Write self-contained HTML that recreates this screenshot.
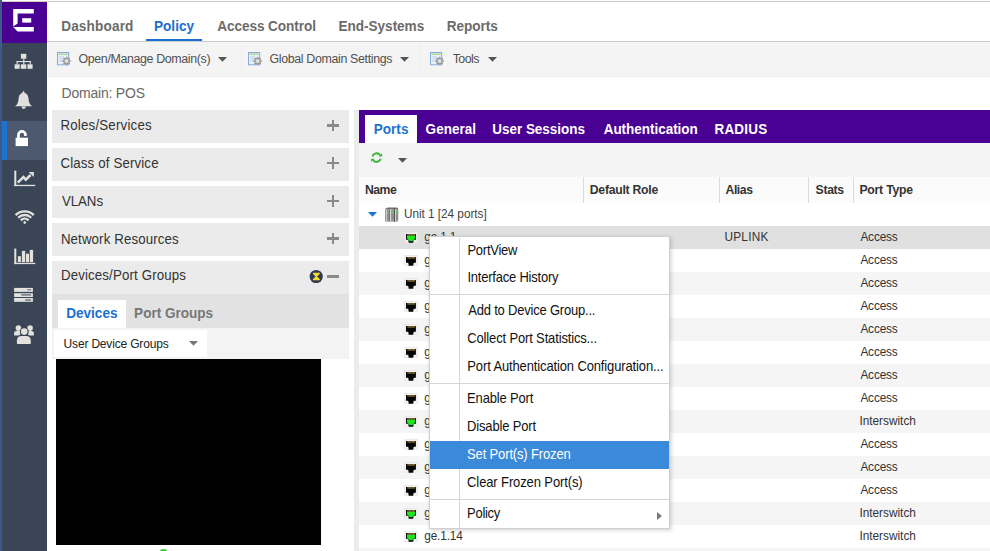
<!DOCTYPE html>
<html><head><meta charset="utf-8"><style>
*{margin:0;padding:0;box-sizing:border-box}
html,body{width:990px;height:551px;overflow:hidden;background:#fff;font-family:"Liberation Sans",sans-serif;position:relative}
.a{position:absolute}
.t{position:absolute;white-space:nowrap;line-height:1}

</style></head><body>
<div class="a" style="left:0;top:0;width:47px;height:551px;background:#3a4657"></div>
<div class="a" style="left:0;top:0;width:2px;height:551px;background:#3f5a86"></div>
<div class="a" style="left:2px;top:0;width:988px;height:1px;background:#fdfdfd"></div>
<div class="a" style="left:2px;top:1px;width:988px;height:1px;background:#cfcfc8"></div>
<div class="a" style="left:2px;top:2px;width:45px;height:41px;background:#4a0093"></div>
<svg class="a" style="left:0;top:0" width="47" height="43" viewBox="0 0 47 43">
<path d="M13.2 8.9 H33.8 V13.6 H17.6 V23.5 L13.2 26.6 Z" fill="#fff"/>
<path d="M13.2 27.1 H33.8 V31.6 H17.6 Z" fill="#fff"/>
<rect x="22.2" y="18.2" width="9" height="4.4" fill="#fff"/>
</svg>
<div class="a" style="left:2px;top:121px;width:45px;height:38.6px;background:#4c596f"></div>
<div class="a" style="left:2px;top:121px;width:4.5px;height:38.6px;background:#1e72d2"></div>
<svg class="a" style="left:0;top:43px" width="47" height="320" viewBox="0 43 47 320">
<!-- sitemap -->
<rect x="20.9" y="53.8" width="5.4" height="4.9" fill="#e2e1de"/>
<rect x="23.2" y="58.5" width="1.2" height="3" fill="#e2e1de"/>
<rect x="16.6" y="61" width="14.2" height="1.1" fill="#e2e1de"/>
<rect x="16.6" y="61" width="1.1" height="3.4" fill="#e2e1de"/>
<rect x="29.7" y="61" width="1.1" height="3.4" fill="#e2e1de"/>
<rect x="23.2" y="61" width="1.2" height="3.4" fill="#e2e1de"/>
<rect x="14.6" y="64.3" width="5.1" height="4.5" fill="#e2e1de"/>
<rect x="20.8" y="64.3" width="5.5" height="4.5" fill="#e2e1de"/>
<rect x="27.4" y="64.3" width="5.2" height="4.5" fill="#e2e1de"/>
<!-- bell -->
<path d="M23.5 91 C24.2 91 24.4 92 24.6 93 C27.5 93.7 28.4 96 28.6 99.5 C28.8 102.5 29.8 104.5 32.2 106.3 L15 106.3 C17.4 104.5 18.3 102.5 18.5 99.5 C18.7 96 19.6 93.7 22.4 93 C22.6 92 22.8 91 23.5 91 Z" fill="#e2e1de"/>
<path d="M21.5 106.6 A2.2 2.3 0 0 0 25.9 106.6 Z" fill="#e2e1de"/>
<!-- lock -->
<rect x="15.6" y="137.7" width="12.4" height="8.4" fill="#fff"/>
<path d="M18.45 137.9 V134.95 A3.5 3.5 0 0 1 25.45 134.95 V135.9" stroke="#fff" stroke-width="2.7" fill="none"/>
<!-- chart -->
<rect x="14.3" y="170.6" width="2" height="15.5" fill="#e2e1de"/>
<rect x="14.3" y="184.8" width="21" height="1.3" fill="#e2e1de"/>
<path d="M17.8 182.6 L23.4 177 L25.8 179.6 L30.6 175" stroke="#e2e1de" stroke-width="2.5" fill="none"/>
<path d="M28.6 172.1 L33.9 172.1 L33.9 177 Z" fill="#e2e1de"/>
<!-- wifi -->
<path d="M15.6 215.1 A12.8 12.8 0 0 1 33.8 215.1" stroke="#e2e1de" stroke-width="2.3" fill="none"/>
<path d="M18.2 217.7 A9.2 9.2 0 0 1 31.2 217.7" stroke="#e2e1de" stroke-width="2.3" fill="none"/>
<path d="M20.8 220.3 A5.6 5.6 0 0 1 28.6 220.3" stroke="#e2e1de" stroke-width="2.3" fill="none"/>
<path d="M23 222.5 L24.7 220.8 L26.4 222.5 L24.7 224.2 Z" fill="#e2e1de"/>
<!-- bars -->
<rect x="14.3" y="248.6" width="2" height="15.5" fill="#e2e1de"/>
<rect x="14.3" y="262.8" width="21" height="1.3" fill="#e2e1de"/>
<rect x="17.9" y="256.2" width="3" height="5.9" fill="#e2e1de"/>
<rect x="21.9" y="250.9" width="3.3" height="11.2" fill="#e2e1de"/>
<rect x="26" y="253.7" width="3.1" height="8.4" fill="#e2e1de"/>
<rect x="29.8" y="249.9" width="3.3" height="12.2" fill="#e2e1de"/>
<!-- server -->
<rect x="14.1" y="287.9" width="18.8" height="4" fill="#e2e1de"/>
<rect x="14.1" y="293.2" width="18.8" height="3.8" fill="#e2e1de"/>
<rect x="14.1" y="298" width="18.8" height="3.8" fill="#e2e1de"/>
<rect x="27.3" y="289.3" width="3.8" height="1" fill="#555c66"/>
<rect x="21.2" y="294.3" width="9.9" height="1.2" fill="#555c66"/>
<rect x="25.2" y="299.4" width="5.9" height="1.2" fill="#555c66"/>
<!-- users -->
<circle cx="18.4" cy="328.1" r="2.8" fill="#e2e1de"/>
<circle cx="30.1" cy="328.1" r="2.8" fill="#e2e1de"/>
<path d="M14.1 335.5 V333 Q14.1 330.9 16.3 330.9 H20.2 V335.5 Z" fill="#e2e1de"/>
<path d="M33.9 335.5 V333 Q33.9 330.9 31.7 330.9 H28.3 V335.5 Z" fill="#e2e1de"/>
<circle cx="24.2" cy="331.6" r="4.3" fill="#3a4657"/>
<circle cx="24.2" cy="331.6" r="3.3" fill="#e2e1de"/>
<path d="M15.9 344.6 V340.5 Q15.9 335 21.4 335 H26.3 Q31.8 335 31.8 340.5 V344.6 Z" fill="#3a4657"/>
<path d="M16.9 343.2 Q16.9 343.9 17.6 343.9 H30.1 Q30.8 343.9 30.8 343.2 V340.6 Q30.8 335.9 26.1 335.9 H21.6 Q16.9 335.9 16.9 340.6 Z" fill="#e2e1de"/>
</svg>
<div class="a" style="left:47px;top:41px;width:943px;height:1px;background:#c9cccc"></div>
<div class="t" style="left:61.20px;top:19.80px;font-weight:bold;font-size:13.6px;letter-spacing:0.150px;color:#6b6b6b;transform:scaleY(1.05);transform-origin:0 11px;">Dashboard</div>
<div class="t" style="left:154.00px;top:19.80px;font-weight:bold;font-size:13.6px;letter-spacing:0.000px;color:#1a6fd0;transform:scaleY(1.05);transform-origin:0 11px;">Policy</div>
<div class="t" style="left:217.30px;top:19.80px;font-weight:bold;font-size:13.6px;letter-spacing:-0.085px;color:#6b6b6b;transform:scaleY(1.05);transform-origin:0 11px;">Access Control</div>
<div class="t" style="left:338.60px;top:19.80px;font-weight:bold;font-size:13.6px;letter-spacing:-0.050px;color:#6b6b6b;transform:scaleY(1.05);transform-origin:0 11px;">End-Systems</div>
<div class="t" style="left:446.80px;top:19.80px;font-weight:bold;font-size:13.6px;letter-spacing:-0.067px;color:#6b6b6b;transform:scaleY(1.05);transform-origin:0 11px;">Reports</div>
<div class="a" style="left:146px;top:38.8px;width:56px;height:2.2px;background:#1a6fd0"></div>
<div class="a" style="left:48px;top:42px;width:942px;height:34px;background:#f4f4f4"></div>
<div class="a" style="left:48px;top:76px;width:942px;height:1px;background:#e8ecec"></div>
<svg class="a" style="left:57px;top:51.5px" width="16" height="16" viewBox="0 0 16 16">
<rect x="0.5" y="0.5" width="11.2" height="12.3" fill="#eaf0f9" stroke="#86a9db" stroke-width="1"/>
<rect x="1.6" y="1.5" width="9" height="1.3" fill="#a3d683"/>
<rect x="2" y="4.4" width="5" height="0.9" fill="#bcd0ea"/>
<rect x="2" y="6.4" width="5" height="0.9" fill="#bcd0ea"/>
<rect x="2" y="8.6" width="5" height="0.9" fill="#bcd0ea"/>
<g transform="translate(9.6 9.0)">
<circle r="3.2" fill="#9a9a9a"/>
<path d="M-0.75 -4.3 H0.75 V4.3 H-0.75 Z M-4.3 -0.75 H4.3 V0.75 H-4.3 Z" fill="#9a9a9a"/>
<path d="M-0.75 -4.3 H0.75 V4.3 H-0.75 Z M-4.3 -0.75 H4.3 V0.75 H-4.3 Z" fill="#9a9a9a" transform="rotate(45)"/>
<circle r="2.2" fill="#c4c4c4"/>
<circle r="1.3" fill="#e4ecf6"/>
</g></svg>
<svg class="a" style="left:247.6px;top:51.5px" width="16" height="16" viewBox="0 0 16 16">
<rect x="0.5" y="0.5" width="11.2" height="12.3" fill="#eaf0f9" stroke="#86a9db" stroke-width="1"/>
<rect x="1.6" y="1.5" width="9" height="1.3" fill="#a3d683"/>
<rect x="2" y="4.4" width="5" height="0.9" fill="#bcd0ea"/>
<rect x="2" y="6.4" width="5" height="0.9" fill="#bcd0ea"/>
<rect x="2" y="8.6" width="5" height="0.9" fill="#bcd0ea"/>
<g transform="translate(9.6 9.0)">
<circle r="3.2" fill="#9a9a9a"/>
<path d="M-0.75 -4.3 H0.75 V4.3 H-0.75 Z M-4.3 -0.75 H4.3 V0.75 H-4.3 Z" fill="#9a9a9a"/>
<path d="M-0.75 -4.3 H0.75 V4.3 H-0.75 Z M-4.3 -0.75 H4.3 V0.75 H-4.3 Z" fill="#9a9a9a" transform="rotate(45)"/>
<circle r="2.2" fill="#c4c4c4"/>
<circle r="1.3" fill="#e4ecf6"/>
</g></svg>
<svg class="a" style="left:430px;top:51.5px" width="16" height="16" viewBox="0 0 16 16">
<rect x="0.5" y="0.5" width="11.2" height="12.3" fill="#eaf0f9" stroke="#86a9db" stroke-width="1"/>
<rect x="1.6" y="1.5" width="9" height="1.3" fill="#a3d683"/>
<rect x="2" y="4.4" width="5" height="0.9" fill="#bcd0ea"/>
<rect x="2" y="6.4" width="5" height="0.9" fill="#bcd0ea"/>
<rect x="2" y="8.6" width="5" height="0.9" fill="#bcd0ea"/>
<g transform="translate(9.6 9.0)">
<circle r="3.2" fill="#9a9a9a"/>
<path d="M-0.75 -4.3 H0.75 V4.3 H-0.75 Z M-4.3 -0.75 H4.3 V0.75 H-4.3 Z" fill="#9a9a9a"/>
<path d="M-0.75 -4.3 H0.75 V4.3 H-0.75 Z M-4.3 -0.75 H4.3 V0.75 H-4.3 Z" fill="#9a9a9a" transform="rotate(45)"/>
<circle r="2.2" fill="#c4c4c4"/>
<circle r="1.3" fill="#e4ecf6"/>
</g></svg>
<div class="a" style="left:241px;top:43px;width:1px;height:32px;background:#efefef"></div>
<div class="a" style="left:419px;top:43px;width:1px;height:32px;background:#efefef"></div>
<div class="t" style="left:78.50px;top:52.90px;font-weight:normal;font-size:12.4px;letter-spacing:-0.355px;color:#505050;transform:scaleY(1.05);transform-origin:0 10px;">Open/Manage Domain(s)</div>
<div class="t" style="left:269.50px;top:52.90px;font-weight:normal;font-size:12.4px;letter-spacing:-0.343px;color:#505050;transform:scaleY(1.05);transform-origin:0 10px;">Global Domain Settings</div>
<div class="t" style="left:452.70px;top:52.90px;font-weight:normal;font-size:12.4px;letter-spacing:-0.525px;color:#505050;transform:scaleY(1.05);transform-origin:0 10px;">Tools</div>
<svg class="a" style="left:218px;top:56.7px" width="10" height="6" viewBox="0 0 10 6"><path d="M0 0 H9 L4.5 4.7 Z" fill="#555"/></svg>
<svg class="a" style="left:400.2px;top:56.8px" width="10" height="6" viewBox="0 0 10 6"><path d="M0 0 H9 L4.5 4.7 Z" fill="#555"/></svg>
<svg class="a" style="left:487.6px;top:56.8px" width="10" height="6" viewBox="0 0 10 6"><path d="M0 0 H9 L4.5 4.7 Z" fill="#555"/></svg>
<div class="t" style="left:61.60px;top:86.20px;font-weight:normal;font-size:14.0px;letter-spacing:-0.220px;color:#6a6a6a;transform:scaleY(1.04);transform-origin:0 12px;">Domain: POS</div>
<div class="a" style="left:52px;top:110.0px;width:297px;height:32.8px;background:#ebebeb"></div>
<div class="t" style="left:60.40px;top:118.90px;font-weight:normal;font-size:13.3px;letter-spacing:0.200px;color:#333;transform:scaleY(1.09);transform-origin:0 11px;">Roles/Services</div>
<div class="a" style="left:327px;top:123.9px;width:12px;height:2.8px;background:#8a8a8a"></div>
<div class="a" style="left:331.6px;top:119.6px;width:2.8px;height:11.4px;background:#8a8a8a"></div>
<div class="a" style="left:52px;top:147.8px;width:297px;height:32.8px;background:#ebebeb"></div>
<div class="t" style="left:60.40px;top:156.60px;font-weight:normal;font-size:13.3px;letter-spacing:0.140px;color:#333;transform:scaleY(1.09);transform-origin:0 11px;">Class of Service</div>
<div class="a" style="left:327px;top:161.7px;width:12px;height:2.8px;background:#8a8a8a"></div>
<div class="a" style="left:331.6px;top:157.4px;width:2.8px;height:11.4px;background:#8a8a8a"></div>
<div class="a" style="left:52px;top:185.6px;width:297px;height:32.8px;background:#ebebeb"></div>
<div class="t" style="left:61.90px;top:195.00px;font-weight:normal;font-size:13.3px;letter-spacing:-0.050px;color:#333;transform:scaleY(1.09);transform-origin:0 11px;">VLANs</div>
<div class="a" style="left:327px;top:199.5px;width:12px;height:2.8px;background:#8a8a8a"></div>
<div class="a" style="left:331.6px;top:195.2px;width:2.8px;height:11.4px;background:#8a8a8a"></div>
<div class="a" style="left:52px;top:223.4px;width:297px;height:32.8px;background:#ebebeb"></div>
<div class="t" style="left:60.90px;top:232.90px;font-weight:normal;font-size:13.3px;letter-spacing:0.106px;color:#333;transform:scaleY(1.09);transform-origin:0 11px;">Network Resources</div>
<div class="a" style="left:327px;top:237.3px;width:12px;height:2.8px;background:#8a8a8a"></div>
<div class="a" style="left:331.6px;top:233.0px;width:2.8px;height:11.4px;background:#8a8a8a"></div>
<div class="a" style="left:52px;top:261.2px;width:297px;height:33px;background:#ebebeb"></div>
<div class="t" style="left:60.90px;top:269.40px;font-weight:normal;font-size:13.3px;letter-spacing:0.133px;color:#333;transform:scaleY(1.09);transform-origin:0 11px;">Devices/Port Groups</div>
<div class="a" style="left:327px;top:275px;width:12px;height:2.9px;background:#8a8a8a"></div>
<svg class="a" style="left:309px;top:269px" width="15" height="15" viewBox="0 0 15 15">
<circle cx="7.2" cy="7.5" r="6.6" fill="#2f3a50"/>
<path d="M4 3.7 H10.8 V4.9 L8 7.5 L10.8 10.1 V11.3 H4 V10.1 L6.6 7.5 L4 4.9 Z" fill="#f1db2c"/>
</svg>
<div class="a" style="left:52px;top:294.3px;width:297px;height:33.7px;background:#e2e2e2"></div>
<div class="a" style="left:57.7px;top:300px;width:68.2px;height:28px;background:#fff"></div>
<div class="t" style="left:66.20px;top:306.80px;font-weight:bold;font-size:13.6px;letter-spacing:-0.017px;color:#1a6fd0;transform:scaleY(1.05);transform-origin:0 11px;">Devices</div>
<div class="t" style="left:134.10px;top:306.80px;font-weight:bold;font-size:13.6px;letter-spacing:-0.030px;color:#777;transform:scaleY(1.05);transform-origin:0 11px;">Port Groups</div>
<div class="a" style="left:52px;top:328px;width:297px;height:31px;background:#f3f3f3"></div>
<div class="a" style="left:53.8px;top:329.8px;width:153.3px;height:27.4px;background:#fff"></div>
<div class="t" style="left:63.60px;top:338.40px;font-weight:normal;font-size:12.0px;letter-spacing:-0.176px;color:#222;transform:scaleY(1.07);transform-origin:0 10px;">User Device Groups</div>
<svg class="a" style="left:188.7px;top:341.2px" width="10" height="6" viewBox="0 0 10 6"><path d="M0 0 H9 L4.5 4.7 Z" fill="#777"/></svg>
<div class="a" style="left:56px;top:359px;width:265px;height:186px;background:#000"></div>
<div class="a" style="left:160px;top:549px;width:7px;height:4px;border-radius:50%;background:#3dcc3d"></div>
<div class="a" style="left:354px;top:110px;width:5px;height:441px;background:#ececec"></div>
<div class="a" style="left:359px;top:110px;width:631px;height:33px;background:#4a0093"></div>
<div class="a" style="left:365px;top:115px;width:51.6px;height:28px;background:#fff"></div>
<div class="t" style="left:373.70px;top:122.80px;font-weight:bold;font-size:13.5px;letter-spacing:0.050px;color:#1a73d6;transform:scaleY(1.09);transform-origin:0 11px;">Ports</div>
<div class="t" style="left:425.60px;top:122.80px;font-weight:bold;font-size:13.5px;letter-spacing:0.033px;color:#fff;transform:scaleY(1.09);transform-origin:0 11px;">General</div>
<div class="t" style="left:492.30px;top:122.80px;font-weight:bold;font-size:13.5px;letter-spacing:-0.033px;color:#fff;transform:scaleY(1.09);transform-origin:0 11px;">User Sessions</div>
<div class="t" style="left:603.70px;top:122.80px;font-weight:bold;font-size:13.5px;letter-spacing:-0.031px;color:#fff;transform:scaleY(1.09);transform-origin:0 11px;">Authentication</div>
<div class="t" style="left:714.50px;top:122.80px;font-weight:bold;font-size:13.5px;letter-spacing:0.180px;color:#fff;transform:scaleY(1.09);transform-origin:0 11px;">RADIUS</div>
<div class="a" style="left:359px;top:143px;width:631px;height:34px;background:#f4f4f4"></div>
<svg class="a" style="left:370px;top:151px" width="14" height="14" viewBox="0 0 14 14">
<path d="M2.45 5.49 A4.3 4.3 0 0 1 9.89 3.84" stroke="#2fb52f" stroke-width="1.9" fill="none"/>
<path d="M12.1 2.2 V5.6 H8.5 Z" fill="#2fb52f"/>
<path d="M10.75 7.71 A4.3 4.3 0 0 1 3.31 9.36" stroke="#2fb52f" stroke-width="1.9" fill="none"/>
<path d="M1.2 11.1 V7.7 H4.8 Z" fill="#2fb52f"/>
</svg>
<svg class="a" style="left:398.2px;top:157.9px" width="10" height="6" viewBox="0 0 10 6"><path d="M0 0 H9 L4.5 4.7 Z" fill="#555"/></svg>
<div class="a" style="left:359px;top:177px;width:631px;height:26px;background:#fbfbfb"></div>
<div class="a" style="left:583px;top:177px;width:1px;height:25.5px;background:#dcdcdc"></div>
<div class="a" style="left:718.5px;top:177px;width:1px;height:25.5px;background:#dcdcdc"></div>
<div class="a" style="left:808px;top:177px;width:1px;height:25.5px;background:#dcdcdc"></div>
<div class="a" style="left:853px;top:177px;width:1px;height:25.5px;background:#dcdcdc"></div>
<div class="t" style="left:364.90px;top:183.90px;font-weight:bold;font-size:12.2px;letter-spacing:-0.467px;color:#333;transform:scaleY(1.05);transform-origin:0 10px;">Name</div>
<div class="t" style="left:589.80px;top:183.90px;font-weight:bold;font-size:12.2px;letter-spacing:-0.245px;color:#333;transform:scaleY(1.05);transform-origin:0 10px;">Default Role</div>
<div class="t" style="left:725.50px;top:183.90px;font-weight:bold;font-size:12.2px;letter-spacing:-0.425px;color:#333;transform:scaleY(1.05);transform-origin:0 10px;">Alias</div>
<div class="t" style="left:815.60px;top:183.90px;font-weight:bold;font-size:12.2px;letter-spacing:-0.325px;color:#333;transform:scaleY(1.05);transform-origin:0 10px;">Stats</div>
<div class="t" style="left:859.40px;top:183.90px;font-weight:bold;font-size:12.2px;letter-spacing:-0.200px;color:#333;transform:scaleY(1.05);transform-origin:0 10px;">Port Type</div>
<svg class="a" style="left:368.1px;top:211.9px" width="10" height="6" viewBox="0 0 10 6"><path d="M0 0 H9 L4.5 4.7 Z" fill="#1a73d6"/></svg>
<svg class="a" style="left:384px;top:206.5px" width="15" height="15" viewBox="0 0 15 15">
<path d="M1.2 14.3 V2.6 Q1.2 1.2 2.6 0.9 L4 0.6 H12.6 Q14.2 0.6 14.2 2.2 V13 Q14.2 14.6 12.6 14.6 H2.2 Q1.2 14.6 1.2 14.3 Z" fill="#6e6e6e"/>
<rect x="1.8" y="2" width="3.8" height="12" fill="#9c9c9c"/>
<rect x="1.8" y="2" width="0.9" height="12" fill="#e6e6e6"/>
<rect x="5.6" y="2" width="0.6" height="12" fill="#5a5a5a"/>
<rect x="6.2" y="2" width="3.8" height="12" fill="#9c9c9c"/>
<rect x="6.2" y="2" width="0.9" height="12" fill="#e6e6e6"/>
<rect x="10.0" y="1.5" width="0.9" height="13" fill="#333"/>
<rect x="10.9" y="2" width="2.8" height="12" fill="#a0a0a0"/>
<rect x="10.9" y="2" width="0.9" height="12" fill="#eaeaea"/>
<rect x="2.7" y="3.6" width="1.6" height="2" fill="#59c85a"/>
<rect x="7.1" y="3.6" width="1.7" height="2" fill="#59c85a"/>
<rect x="11.8" y="3.6" width="1.5" height="2" fill="#59c85a"/>
<rect x="2.8" y="7" width="2.5" height="6" fill="#858585" opacity="0.6"/>
<rect x="7.2" y="7" width="2.5" height="6" fill="#858585" opacity="0.6"/>
<rect x="11.8" y="7" width="1.8" height="6" fill="#858585" opacity="0.6"/>
</svg>
<div class="t" style="left:404.00px;top:208.60px;font-weight:normal;font-size:11.8px;letter-spacing:-0.038px;color:#444;transform:scaleY(1.09);transform-origin:0 9px;">Unit 1 [24 ports]</div>
<div class="a" style="left:359px;top:226.00px;width:631px;height:23px;background:#e0e0e0"></div>
<svg class="a" style="left:404px;top:231.80px" width="14" height="11.2" viewBox="0 0 14 11.2">
<rect x="0" y="0" width="14" height="11.2" fill="#e4e4e4" opacity="0.75"/>
<rect x="1" y="1" width="12" height="9.4" fill="#f4f4f4" opacity="0.8"/>
<path d="M2 2 H11.9 V7.8 H9.6 L9.2 10.7 H4.7 L4.3 7.8 H2 Z" fill="#050505"/>
<path d="M3 3.5 H11 V6.6 L8.2 9.2 H5.8 L3 6.6 Z" fill="#1ee61e"/>
<rect x="3.4" y="2.2" width="7.4" height="1.4" fill="#a88f3f"/>
<rect x="4.3" y="2.2" width="0.5" height="1.4" fill="#222"/><rect x="5.8" y="2.2" width="0.5" height="1.4" fill="#222"/><rect x="7.3" y="2.2" width="0.5" height="1.4" fill="#222"/><rect x="8.8" y="2.2" width="0.5" height="1.4" fill="#222"/>
</svg>
<div class="t" style="left:424.20px;top:232.10px;font-weight:normal;font-size:11.8px;letter-spacing:-0.117px;color:#333;transform:scaleY(1.09);transform-origin:0 9px;">ge.1.1</div>
<div class="t" style="left:724.50px;top:232.10px;font-weight:normal;font-size:11.8px;letter-spacing:0.240px;color:#333;transform:scaleY(1.09);transform-origin:0 9px;">UPLINK</div>
<div class="t" style="left:860.40px;top:232.10px;font-weight:normal;font-size:11.8px;letter-spacing:-0.140px;color:#333;transform:scaleY(1.09);transform-origin:0 9px;">Access</div>
<div class="a" style="left:359px;top:248.98px;width:631px;height:23px;background:#fff"></div>
<svg class="a" style="left:404px;top:254.78px" width="14" height="11.2" viewBox="0 0 14 11.2">
<rect x="0" y="0" width="14" height="11.2" fill="#e4e4e4" opacity="0.75"/>
<rect x="1" y="1" width="12" height="9.4" fill="#f4f4f4" opacity="0.8"/>
<path d="M2 2 H11.9 V7.8 H9.6 L9.2 10.7 H4.7 L4.3 7.8 H2 Z" fill="#050505"/>
<path d="M3 3.5 H11 V6.6 L8.2 9.2 H5.8 L3 6.6 Z" fill="#050505"/>
<rect x="3.4" y="2.2" width="7.4" height="1.4" fill="#a88f3f"/>
<rect x="4.3" y="2.2" width="0.5" height="1.4" fill="#222"/><rect x="5.8" y="2.2" width="0.5" height="1.4" fill="#222"/><rect x="7.3" y="2.2" width="0.5" height="1.4" fill="#222"/><rect x="8.8" y="2.2" width="0.5" height="1.4" fill="#222"/>
</svg>
<div class="t" style="left:424.20px;top:255.08px;font-weight:normal;font-size:11.8px;letter-spacing:-0.117px;color:#333;transform:scaleY(1.09);transform-origin:0 9px;">ge.1.2</div>
<div class="t" style="left:860.40px;top:255.08px;font-weight:normal;font-size:11.8px;letter-spacing:-0.140px;color:#333;transform:scaleY(1.09);transform-origin:0 9px;">Access</div>
<div class="a" style="left:359px;top:271.96px;width:631px;height:23px;background:#f5f5f5"></div>
<svg class="a" style="left:404px;top:277.76px" width="14" height="11.2" viewBox="0 0 14 11.2">
<rect x="0" y="0" width="14" height="11.2" fill="#e4e4e4" opacity="0.75"/>
<rect x="1" y="1" width="12" height="9.4" fill="#f4f4f4" opacity="0.8"/>
<path d="M2 2 H11.9 V7.8 H9.6 L9.2 10.7 H4.7 L4.3 7.8 H2 Z" fill="#050505"/>
<path d="M3 3.5 H11 V6.6 L8.2 9.2 H5.8 L3 6.6 Z" fill="#050505"/>
<rect x="3.4" y="2.2" width="7.4" height="1.4" fill="#a88f3f"/>
<rect x="4.3" y="2.2" width="0.5" height="1.4" fill="#222"/><rect x="5.8" y="2.2" width="0.5" height="1.4" fill="#222"/><rect x="7.3" y="2.2" width="0.5" height="1.4" fill="#222"/><rect x="8.8" y="2.2" width="0.5" height="1.4" fill="#222"/>
</svg>
<div class="t" style="left:424.20px;top:278.06px;font-weight:normal;font-size:11.8px;letter-spacing:-0.117px;color:#333;transform:scaleY(1.09);transform-origin:0 9px;">ge.1.3</div>
<div class="t" style="left:860.40px;top:278.06px;font-weight:normal;font-size:11.8px;letter-spacing:-0.140px;color:#333;transform:scaleY(1.09);transform-origin:0 9px;">Access</div>
<div class="a" style="left:359px;top:294.94px;width:631px;height:23px;background:#fff"></div>
<svg class="a" style="left:404px;top:300.74px" width="14" height="11.2" viewBox="0 0 14 11.2">
<rect x="0" y="0" width="14" height="11.2" fill="#e4e4e4" opacity="0.75"/>
<rect x="1" y="1" width="12" height="9.4" fill="#f4f4f4" opacity="0.8"/>
<path d="M2 2 H11.9 V7.8 H9.6 L9.2 10.7 H4.7 L4.3 7.8 H2 Z" fill="#050505"/>
<path d="M3 3.5 H11 V6.6 L8.2 9.2 H5.8 L3 6.6 Z" fill="#050505"/>
<rect x="3.4" y="2.2" width="7.4" height="1.4" fill="#a88f3f"/>
<rect x="4.3" y="2.2" width="0.5" height="1.4" fill="#222"/><rect x="5.8" y="2.2" width="0.5" height="1.4" fill="#222"/><rect x="7.3" y="2.2" width="0.5" height="1.4" fill="#222"/><rect x="8.8" y="2.2" width="0.5" height="1.4" fill="#222"/>
</svg>
<div class="t" style="left:424.20px;top:301.04px;font-weight:normal;font-size:11.8px;letter-spacing:-0.117px;color:#333;transform:scaleY(1.09);transform-origin:0 9px;">ge.1.4</div>
<div class="t" style="left:860.40px;top:301.04px;font-weight:normal;font-size:11.8px;letter-spacing:-0.140px;color:#333;transform:scaleY(1.09);transform-origin:0 9px;">Access</div>
<div class="a" style="left:359px;top:317.92px;width:631px;height:23px;background:#f5f5f5"></div>
<svg class="a" style="left:404px;top:323.72px" width="14" height="11.2" viewBox="0 0 14 11.2">
<rect x="0" y="0" width="14" height="11.2" fill="#e4e4e4" opacity="0.75"/>
<rect x="1" y="1" width="12" height="9.4" fill="#f4f4f4" opacity="0.8"/>
<path d="M2 2 H11.9 V7.8 H9.6 L9.2 10.7 H4.7 L4.3 7.8 H2 Z" fill="#050505"/>
<path d="M3 3.5 H11 V6.6 L8.2 9.2 H5.8 L3 6.6 Z" fill="#050505"/>
<rect x="3.4" y="2.2" width="7.4" height="1.4" fill="#a88f3f"/>
<rect x="4.3" y="2.2" width="0.5" height="1.4" fill="#222"/><rect x="5.8" y="2.2" width="0.5" height="1.4" fill="#222"/><rect x="7.3" y="2.2" width="0.5" height="1.4" fill="#222"/><rect x="8.8" y="2.2" width="0.5" height="1.4" fill="#222"/>
</svg>
<div class="t" style="left:424.20px;top:324.02px;font-weight:normal;font-size:11.8px;letter-spacing:-0.117px;color:#333;transform:scaleY(1.09);transform-origin:0 9px;">ge.1.5</div>
<div class="t" style="left:860.40px;top:324.02px;font-weight:normal;font-size:11.8px;letter-spacing:-0.140px;color:#333;transform:scaleY(1.09);transform-origin:0 9px;">Access</div>
<div class="a" style="left:359px;top:340.90px;width:631px;height:23px;background:#fff"></div>
<svg class="a" style="left:404px;top:346.70px" width="14" height="11.2" viewBox="0 0 14 11.2">
<rect x="0" y="0" width="14" height="11.2" fill="#e4e4e4" opacity="0.75"/>
<rect x="1" y="1" width="12" height="9.4" fill="#f4f4f4" opacity="0.8"/>
<path d="M2 2 H11.9 V7.8 H9.6 L9.2 10.7 H4.7 L4.3 7.8 H2 Z" fill="#050505"/>
<path d="M3 3.5 H11 V6.6 L8.2 9.2 H5.8 L3 6.6 Z" fill="#050505"/>
<rect x="3.4" y="2.2" width="7.4" height="1.4" fill="#a88f3f"/>
<rect x="4.3" y="2.2" width="0.5" height="1.4" fill="#222"/><rect x="5.8" y="2.2" width="0.5" height="1.4" fill="#222"/><rect x="7.3" y="2.2" width="0.5" height="1.4" fill="#222"/><rect x="8.8" y="2.2" width="0.5" height="1.4" fill="#222"/>
</svg>
<div class="t" style="left:424.20px;top:347.00px;font-weight:normal;font-size:11.8px;letter-spacing:-0.117px;color:#333;transform:scaleY(1.09);transform-origin:0 9px;">ge.1.6</div>
<div class="t" style="left:860.40px;top:347.00px;font-weight:normal;font-size:11.8px;letter-spacing:-0.140px;color:#333;transform:scaleY(1.09);transform-origin:0 9px;">Access</div>
<div class="a" style="left:359px;top:363.88px;width:631px;height:23px;background:#f5f5f5"></div>
<svg class="a" style="left:404px;top:369.68px" width="14" height="11.2" viewBox="0 0 14 11.2">
<rect x="0" y="0" width="14" height="11.2" fill="#e4e4e4" opacity="0.75"/>
<rect x="1" y="1" width="12" height="9.4" fill="#f4f4f4" opacity="0.8"/>
<path d="M2 2 H11.9 V7.8 H9.6 L9.2 10.7 H4.7 L4.3 7.8 H2 Z" fill="#050505"/>
<path d="M3 3.5 H11 V6.6 L8.2 9.2 H5.8 L3 6.6 Z" fill="#050505"/>
<rect x="3.4" y="2.2" width="7.4" height="1.4" fill="#a88f3f"/>
<rect x="4.3" y="2.2" width="0.5" height="1.4" fill="#222"/><rect x="5.8" y="2.2" width="0.5" height="1.4" fill="#222"/><rect x="7.3" y="2.2" width="0.5" height="1.4" fill="#222"/><rect x="8.8" y="2.2" width="0.5" height="1.4" fill="#222"/>
</svg>
<div class="t" style="left:424.20px;top:369.98px;font-weight:normal;font-size:11.8px;letter-spacing:-0.117px;color:#333;transform:scaleY(1.09);transform-origin:0 9px;">ge.1.7</div>
<div class="t" style="left:860.40px;top:369.98px;font-weight:normal;font-size:11.8px;letter-spacing:-0.140px;color:#333;transform:scaleY(1.09);transform-origin:0 9px;">Access</div>
<div class="a" style="left:359px;top:386.86px;width:631px;height:23px;background:#fff"></div>
<svg class="a" style="left:404px;top:392.66px" width="14" height="11.2" viewBox="0 0 14 11.2">
<rect x="0" y="0" width="14" height="11.2" fill="#e4e4e4" opacity="0.75"/>
<rect x="1" y="1" width="12" height="9.4" fill="#f4f4f4" opacity="0.8"/>
<path d="M2 2 H11.9 V7.8 H9.6 L9.2 10.7 H4.7 L4.3 7.8 H2 Z" fill="#050505"/>
<path d="M3 3.5 H11 V6.6 L8.2 9.2 H5.8 L3 6.6 Z" fill="#050505"/>
<rect x="3.4" y="2.2" width="7.4" height="1.4" fill="#a88f3f"/>
<rect x="4.3" y="2.2" width="0.5" height="1.4" fill="#222"/><rect x="5.8" y="2.2" width="0.5" height="1.4" fill="#222"/><rect x="7.3" y="2.2" width="0.5" height="1.4" fill="#222"/><rect x="8.8" y="2.2" width="0.5" height="1.4" fill="#222"/>
</svg>
<div class="t" style="left:424.20px;top:392.96px;font-weight:normal;font-size:11.8px;letter-spacing:-0.117px;color:#333;transform:scaleY(1.09);transform-origin:0 9px;">ge.1.8</div>
<div class="t" style="left:860.40px;top:392.96px;font-weight:normal;font-size:11.8px;letter-spacing:-0.140px;color:#333;transform:scaleY(1.09);transform-origin:0 9px;">Access</div>
<div class="a" style="left:359px;top:409.84px;width:631px;height:23px;background:#f5f5f5"></div>
<svg class="a" style="left:404px;top:415.64px" width="14" height="11.2" viewBox="0 0 14 11.2">
<rect x="0" y="0" width="14" height="11.2" fill="#e4e4e4" opacity="0.75"/>
<rect x="1" y="1" width="12" height="9.4" fill="#f4f4f4" opacity="0.8"/>
<path d="M2 2 H11.9 V7.8 H9.6 L9.2 10.7 H4.7 L4.3 7.8 H2 Z" fill="#050505"/>
<path d="M3 3.5 H11 V6.6 L8.2 9.2 H5.8 L3 6.6 Z" fill="#1ee61e"/>
<rect x="3.4" y="2.2" width="7.4" height="1.4" fill="#a88f3f"/>
<rect x="4.3" y="2.2" width="0.5" height="1.4" fill="#222"/><rect x="5.8" y="2.2" width="0.5" height="1.4" fill="#222"/><rect x="7.3" y="2.2" width="0.5" height="1.4" fill="#222"/><rect x="8.8" y="2.2" width="0.5" height="1.4" fill="#222"/>
</svg>
<div class="t" style="left:424.20px;top:415.94px;font-weight:normal;font-size:11.8px;letter-spacing:-0.117px;color:#333;transform:scaleY(1.09);transform-origin:0 9px;">ge.1.9</div>
<div class="t" style="left:859.40px;top:415.94px;font-weight:normal;font-size:11.8px;letter-spacing:0.010px;color:#333;transform:scaleY(1.09);transform-origin:0 9px;">Interswitch</div>
<div class="a" style="left:359px;top:432.82px;width:631px;height:23px;background:#fff"></div>
<svg class="a" style="left:404px;top:438.62px" width="14" height="11.2" viewBox="0 0 14 11.2">
<rect x="0" y="0" width="14" height="11.2" fill="#e4e4e4" opacity="0.75"/>
<rect x="1" y="1" width="12" height="9.4" fill="#f4f4f4" opacity="0.8"/>
<path d="M2 2 H11.9 V7.8 H9.6 L9.2 10.7 H4.7 L4.3 7.8 H2 Z" fill="#050505"/>
<path d="M3 3.5 H11 V6.6 L8.2 9.2 H5.8 L3 6.6 Z" fill="#050505"/>
<rect x="3.4" y="2.2" width="7.4" height="1.4" fill="#a88f3f"/>
<rect x="4.3" y="2.2" width="0.5" height="1.4" fill="#222"/><rect x="5.8" y="2.2" width="0.5" height="1.4" fill="#222"/><rect x="7.3" y="2.2" width="0.5" height="1.4" fill="#222"/><rect x="8.8" y="2.2" width="0.5" height="1.4" fill="#222"/>
</svg>
<div class="t" style="left:424.20px;top:438.92px;font-weight:normal;font-size:11.8px;letter-spacing:-0.117px;color:#333;transform:scaleY(1.09);transform-origin:0 9px;">ge.1.10</div>
<div class="t" style="left:860.40px;top:438.92px;font-weight:normal;font-size:11.8px;letter-spacing:-0.140px;color:#333;transform:scaleY(1.09);transform-origin:0 9px;">Access</div>
<div class="a" style="left:359px;top:455.80px;width:631px;height:23px;background:#f5f5f5"></div>
<svg class="a" style="left:404px;top:461.60px" width="14" height="11.2" viewBox="0 0 14 11.2">
<rect x="0" y="0" width="14" height="11.2" fill="#e4e4e4" opacity="0.75"/>
<rect x="1" y="1" width="12" height="9.4" fill="#f4f4f4" opacity="0.8"/>
<path d="M2 2 H11.9 V7.8 H9.6 L9.2 10.7 H4.7 L4.3 7.8 H2 Z" fill="#050505"/>
<path d="M3 3.5 H11 V6.6 L8.2 9.2 H5.8 L3 6.6 Z" fill="#050505"/>
<rect x="3.4" y="2.2" width="7.4" height="1.4" fill="#a88f3f"/>
<rect x="4.3" y="2.2" width="0.5" height="1.4" fill="#222"/><rect x="5.8" y="2.2" width="0.5" height="1.4" fill="#222"/><rect x="7.3" y="2.2" width="0.5" height="1.4" fill="#222"/><rect x="8.8" y="2.2" width="0.5" height="1.4" fill="#222"/>
</svg>
<div class="t" style="left:424.20px;top:461.90px;font-weight:normal;font-size:11.8px;letter-spacing:-0.117px;color:#333;transform:scaleY(1.09);transform-origin:0 9px;">ge.1.11</div>
<div class="t" style="left:860.40px;top:461.90px;font-weight:normal;font-size:11.8px;letter-spacing:-0.140px;color:#333;transform:scaleY(1.09);transform-origin:0 9px;">Access</div>
<div class="a" style="left:359px;top:478.78px;width:631px;height:23px;background:#fff"></div>
<svg class="a" style="left:404px;top:484.58px" width="14" height="11.2" viewBox="0 0 14 11.2">
<rect x="0" y="0" width="14" height="11.2" fill="#e4e4e4" opacity="0.75"/>
<rect x="1" y="1" width="12" height="9.4" fill="#f4f4f4" opacity="0.8"/>
<path d="M2 2 H11.9 V7.8 H9.6 L9.2 10.7 H4.7 L4.3 7.8 H2 Z" fill="#050505"/>
<path d="M3 3.5 H11 V6.6 L8.2 9.2 H5.8 L3 6.6 Z" fill="#050505"/>
<rect x="3.4" y="2.2" width="7.4" height="1.4" fill="#a88f3f"/>
<rect x="4.3" y="2.2" width="0.5" height="1.4" fill="#222"/><rect x="5.8" y="2.2" width="0.5" height="1.4" fill="#222"/><rect x="7.3" y="2.2" width="0.5" height="1.4" fill="#222"/><rect x="8.8" y="2.2" width="0.5" height="1.4" fill="#222"/>
</svg>
<div class="t" style="left:424.20px;top:484.88px;font-weight:normal;font-size:11.8px;letter-spacing:-0.117px;color:#333;transform:scaleY(1.09);transform-origin:0 9px;">ge.1.12</div>
<div class="t" style="left:860.40px;top:484.88px;font-weight:normal;font-size:11.8px;letter-spacing:-0.140px;color:#333;transform:scaleY(1.09);transform-origin:0 9px;">Access</div>
<div class="a" style="left:359px;top:501.76px;width:631px;height:23px;background:#f5f5f5"></div>
<svg class="a" style="left:404px;top:507.56px" width="14" height="11.2" viewBox="0 0 14 11.2">
<rect x="0" y="0" width="14" height="11.2" fill="#e4e4e4" opacity="0.75"/>
<rect x="1" y="1" width="12" height="9.4" fill="#f4f4f4" opacity="0.8"/>
<path d="M2 2 H11.9 V7.8 H9.6 L9.2 10.7 H4.7 L4.3 7.8 H2 Z" fill="#050505"/>
<path d="M3 3.5 H11 V6.6 L8.2 9.2 H5.8 L3 6.6 Z" fill="#1ee61e"/>
<rect x="3.4" y="2.2" width="7.4" height="1.4" fill="#a88f3f"/>
<rect x="4.3" y="2.2" width="0.5" height="1.4" fill="#222"/><rect x="5.8" y="2.2" width="0.5" height="1.4" fill="#222"/><rect x="7.3" y="2.2" width="0.5" height="1.4" fill="#222"/><rect x="8.8" y="2.2" width="0.5" height="1.4" fill="#222"/>
</svg>
<div class="t" style="left:424.20px;top:507.86px;font-weight:normal;font-size:11.8px;letter-spacing:-0.117px;color:#333;transform:scaleY(1.09);transform-origin:0 9px;">ge.1.13</div>
<div class="t" style="left:859.40px;top:507.86px;font-weight:normal;font-size:11.8px;letter-spacing:0.010px;color:#333;transform:scaleY(1.09);transform-origin:0 9px;">Interswitch</div>
<div class="a" style="left:359px;top:524.74px;width:631px;height:23px;background:#fff"></div>
<svg class="a" style="left:404px;top:530.54px" width="14" height="11.2" viewBox="0 0 14 11.2">
<rect x="0" y="0" width="14" height="11.2" fill="#e4e4e4" opacity="0.75"/>
<rect x="1" y="1" width="12" height="9.4" fill="#f4f4f4" opacity="0.8"/>
<path d="M2 2 H11.9 V7.8 H9.6 L9.2 10.7 H4.7 L4.3 7.8 H2 Z" fill="#050505"/>
<path d="M3 3.5 H11 V6.6 L8.2 9.2 H5.8 L3 6.6 Z" fill="#1ee61e"/>
<rect x="3.4" y="2.2" width="7.4" height="1.4" fill="#a88f3f"/>
<rect x="4.3" y="2.2" width="0.5" height="1.4" fill="#222"/><rect x="5.8" y="2.2" width="0.5" height="1.4" fill="#222"/><rect x="7.3" y="2.2" width="0.5" height="1.4" fill="#222"/><rect x="8.8" y="2.2" width="0.5" height="1.4" fill="#222"/>
</svg>
<div class="t" style="left:424.20px;top:530.84px;font-weight:normal;font-size:11.8px;letter-spacing:-0.117px;color:#333;transform:scaleY(1.09);transform-origin:0 9px;">ge.1.14</div>
<div class="t" style="left:859.40px;top:530.84px;font-weight:normal;font-size:11.8px;letter-spacing:0.010px;color:#333;transform:scaleY(1.09);transform-origin:0 9px;">Interswitch</div>
<div class="a" style="left:359px;top:547.7px;width:631px;height:4px;background:#f5f5f5"></div>
<div class="a" style="left:429px;top:235.6px;width:241px;height:293px;background:#fff;border:1px solid #d0d0d0;box-shadow:1px 1px 4px rgba(0,0,0,0.2)"></div>
<div class="a" style="left:459.2px;top:237.5px;width:1px;height:290px;background:#d6d6d6"></div>
<div class="a" style="left:430px;top:441.4px;width:239px;height:27.5px;background:#3b8ad9"></div>
<div class="a" style="left:430px;top:294px;width:239px;height:1px;background:#d6d6d6"></div>
<div class="a" style="left:430px;top:383.4px;width:239px;height:1px;background:#d6d6d6"></div>
<div class="a" style="left:430px;top:499.3px;width:239px;height:1px;background:#d6d6d6"></div>
<div class="t" style="left:467.40px;top:243.80px;font-weight:normal;font-size:13.0px;letter-spacing:-0.243px;color:#111;transform:scaleY(1.09);transform-origin:0 11px;">PortView</div>
<div class="t" style="left:467.40px;top:271.40px;font-weight:normal;font-size:13.0px;letter-spacing:-0.219px;color:#111;transform:scaleY(1.09);transform-origin:0 11px;">Interface History</div>
<div class="t" style="left:468.30px;top:304.00px;font-weight:normal;font-size:13.0px;letter-spacing:-0.210px;color:#111;transform:scaleY(1.09);transform-origin:0 11px;">Add to Device Group...</div>
<div class="t" style="left:467.30px;top:331.80px;font-weight:normal;font-size:13.0px;letter-spacing:-0.152px;color:#111;transform:scaleY(1.09);transform-origin:0 11px;">Collect Port Statistics...</div>
<div class="t" style="left:467.30px;top:359.60px;font-weight:normal;font-size:13.0px;letter-spacing:-0.131px;color:#111;transform:scaleY(1.09);transform-origin:0 11px;">Port Authentication Configuration...</div>
<div class="t" style="left:467.10px;top:391.80px;font-weight:normal;font-size:13.0px;letter-spacing:-0.170px;color:#111;transform:scaleY(1.09);transform-origin:0 11px;">Enable Port</div>
<div class="t" style="left:467.10px;top:419.70px;font-weight:normal;font-size:13.0px;letter-spacing:-0.173px;color:#111;transform:scaleY(1.09);transform-origin:0 11px;">Disable Port</div>
<div class="t" style="left:467.10px;top:447.70px;font-weight:normal;font-size:13.0px;letter-spacing:-0.153px;color:#fff;transform:scaleY(1.09);transform-origin:0 11px;">Set Port(s) Frozen</div>
<div class="t" style="left:467.10px;top:475.60px;font-weight:normal;font-size:13.0px;letter-spacing:-0.116px;color:#111;transform:scaleY(1.09);transform-origin:0 11px;">Clear Frozen Port(s)</div>
<div class="t" style="left:467.10px;top:507.40px;font-weight:normal;font-size:13.0px;letter-spacing:-0.300px;color:#111;transform:scaleY(1.09);transform-origin:0 11px;">Policy</div>
<svg class="a" style="left:656px;top:511px" width="8" height="10" viewBox="0 0 8 10"><path d="M1 1 L6 5 L1 9 Z" fill="#7a7a7a"/></svg>
</body></html>
